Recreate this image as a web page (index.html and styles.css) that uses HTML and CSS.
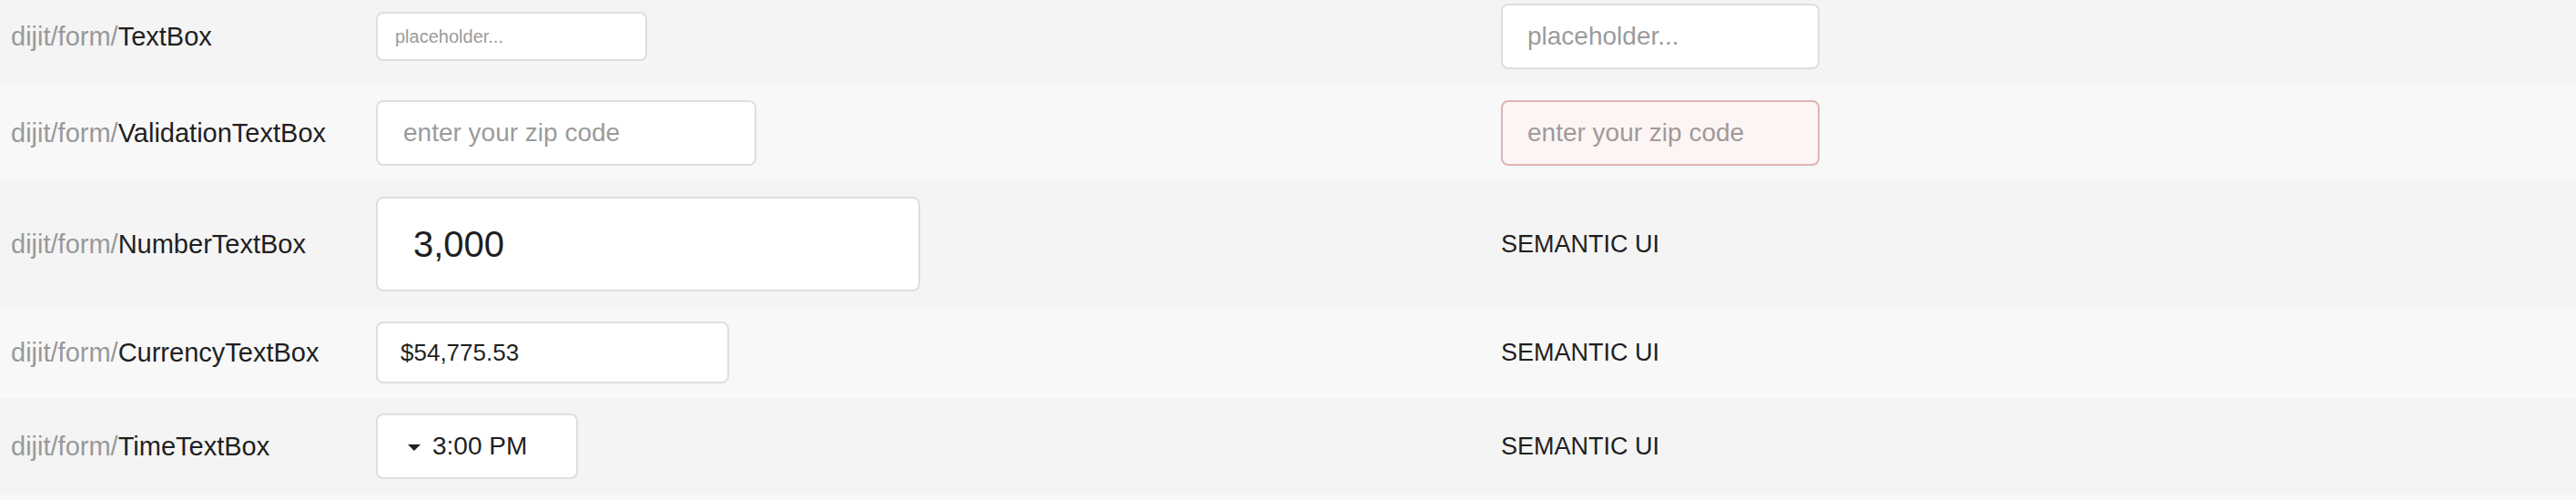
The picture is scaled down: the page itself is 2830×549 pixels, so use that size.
FILE: index.html
```html
<!DOCTYPE html>
<html lang="en">
<head>
<meta charset="utf-8">
<title>Text boxes</title>
<link rel="stylesheet" href="styles.css">
</head>
<body>
<div class="table">
  <div class="row odd">
    <div class="label"><span class="path">dijit/form/</span><span class="name">TextBox</span></div>
    <div class="cell"><input class="dj dj-small" type="text" placeholder="placeholder..."></div>
    <div class="cell"><input class="sui" type="text" placeholder="placeholder..."></div>
  </div>
  <div class="row even">
    <div class="label"><span class="path">dijit/form/</span><span class="name">ValidationTextBox</span></div>
    <div class="cell"><input class="dj dj-zip" type="text" placeholder="enter your zip code"></div>
    <div class="cell"><input class="sui sui-error" type="text" placeholder="enter your zip code"></div>
  </div>
  <div class="row odd">
    <div class="label"><span class="path">dijit/form/</span><span class="name">NumberTextBox</span></div>
    <div class="cell"><input class="dj dj-number" type="text" value="3,000"></div>
    <div class="cell"><span class="sui-text">SEMANTIC UI</span></div>
  </div>
  <div class="row even row-tight">
    <div class="label"><span class="path">dijit/form/</span><span class="name">CurrencyTextBox</span></div>
    <div class="cell"><input class="dj dj-currency" type="text" value="$54,775.53"></div>
    <div class="cell"><span class="sui-text">SEMANTIC UI</span></div>
  </div>
  <div class="row odd">
    <div class="label"><span class="path">dijit/form/</span><span class="name">TimeTextBox</span></div>
    <div class="cell"><div class="dj dj-time"><span class="arrow"></span><span class="time">3:00 PM</span></div></div>
    <div class="cell"><span class="sui-text">SEMANTIC UI</span></div>
  </div>
</div>
</body>
</html>
```

FILE: styles.css
```css
html, body {
  margin: 0;
  padding: 0;
}

body {
  background: #f8f8f8;
  font-family: "Liberation Sans", Arial, Helvetica, sans-serif;
  color: #1f1f1f;
}

.table {
  margin-top: -13px;
}

.row {
  display: grid;
  grid-template-columns: 401px 1236px 1fr;
  align-items: center;
  padding: 17px 0 17px 12px;
}

.row-tight {
  padding-top: 16px;
  padding-bottom: 16px;
}

.odd {
  background: #f4f4f4;
}

.even {
  background: #f8f8f8;
}

.label {
  font-size: 29px;
  line-height: 34px;
  white-space: nowrap;
}

.path {
  color: #999999;
}

.name {
  color: #1f1f1f;
}

.cell {
  display: flex;
  align-items: center;
}

input {
  font-family: "Liberation Sans", Arial, Helvetica, sans-serif;
  margin: 0;
  outline: none;
  box-sizing: border-box;
  background: #ffffff;
  border: 2px solid #dedede;
  border-radius: 8px;
  color: #1f1f1f;
}

input::placeholder {
  color: #9b9b9b;
  opacity: 1;
}

.dj {
  box-sizing: border-box;
  background: #ffffff;
  border: 2px solid #dedede;
  border-radius: 8px;
}

.dj-small {
  width: 298px;
  height: 54px;
  font-size: 20px;
  padding: 0 0 0 19px;
}

.dj-zip {
  width: 418px;
  height: 72px;
  font-size: 28px;
  padding: 0 0 0 28px;
}

.dj-number {
  width: 598px;
  height: 104px;
  font-size: 40px;
  padding: 0 0 0 39px;
}

.dj-currency {
  width: 388px;
  height: 68px;
  font-size: 26px;
  padding: 0 0 0 25px;
}

.dj-time {
  width: 222px;
  height: 72px;
  display: flex;
  align-items: center;
  padding-left: 33px;
  font-size: 28px;
  color: #1f1f1f;
}

.arrow {
  width: 0;
  height: 0;
  border-left: 7px solid transparent;
  border-right: 7px solid transparent;
  border-top: 7px solid #1f1f1f;
  margin-right: 13px;
  margin-top: 2px;
}

.sui {
  width: 350px;
  height: 72px;
  font-size: 28px;
  padding: 0 0 0 27px;
}

.sui-error {
  background: #fdf5f4;
  border-color: #e0b4b4;
}

.sui-error::placeholder {
  color: #a09999;
}

.sui-text {
  font-size: 27px;
  color: #1f1f1f;
  padding-left: 0;
}
```
